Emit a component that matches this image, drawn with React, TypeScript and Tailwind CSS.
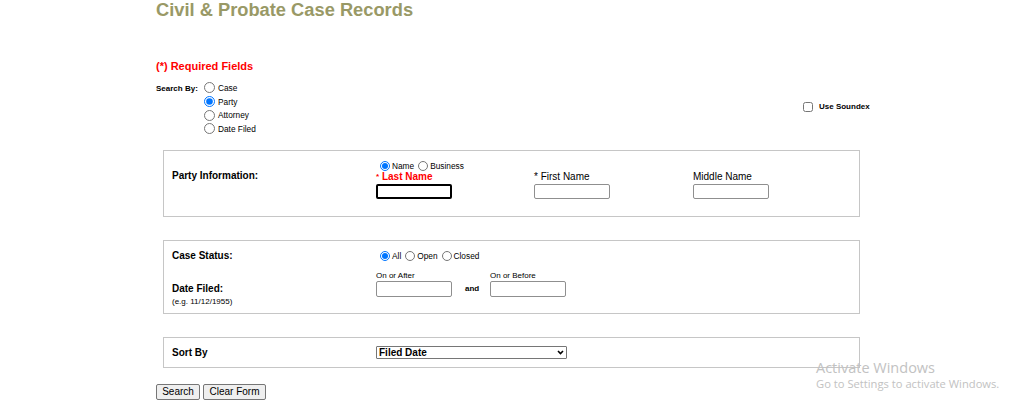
function Radio({ checked, label }: { checked?: boolean; label: string }) {
  return (
    <label className="flex items-center h-[10px] ml-[4px]">
      <input type="radio" defaultChecked={checked} className="m-0 w-[10px] h-[10px] accent-[#0075ff]" />
      <span className="ml-[2px] text-[8.3px] leading-[8px]">{label}</span>
    </label>
  );
}

function TextBox({ focused }: { focused?: boolean }) {
  return (
    <input
      type="text"
      className={
        focused
          ? "block w-[76px] h-[15px] border-2 border-black rounded-[2px] bg-white"
          : "block w-[76px] h-[15px] border border-[#8f8f8f] rounded-[2px] bg-white"
      }
    />
  );
}

export default function App() {
  return (
    <main className="relative w-[1024px] h-[406px] overflow-hidden bg-white text-black font-['Liberation_Sans',Arial,sans-serif]">
      <div className="pl-[156px]">
        <h1 className="text-[18.3px] leading-[19px] font-bold text-[#999966]">Civil &amp; Probate Case Records</h1>

        <p className="mt-[42px] text-[11px] leading-[11px] font-bold text-[#ff0000]">(*) Required Fields</p>

        {/* search by */}
        <div className="mt-[9px] flex">
          <div className="w-[647px] flex">
            <div className="w-[48px] pt-[1px] text-[8px] leading-[13.7px] font-bold">Search By:</div>
            <div className="flex flex-col">
              {["Case", "Party", "Attorney", "Date Filed"].map((s) => (
                <label key={s} className="flex items-center h-[13.7px]">
                  <input
                    type="radio"
                    name="searchby"
                    defaultChecked={s === "Party"}
                    className="m-0 w-[11px] h-[11px] accent-[#0075ff]"
                  />
                  <span className="ml-[3px] text-[8.3px] leading-[8px]">{s}</span>
                </label>
              ))}
            </div>
          </div>
          <label className="mt-[21px] self-start flex items-center h-[10px]">
            <input type="checkbox" className="m-0 w-[10px] h-[10px]" />
            <span className="ml-[6px] text-[8px] leading-[8px] font-bold">Use Soundex</span>
          </label>
        </div>

        {/* party information */}
        <section className="mt-[14px] ml-[7px] w-[697px] h-[67px] border border-[#c6c6c6] pl-[8px] flex">
          <div className="w-[204px] pt-[20.5px] text-[10px] leading-[10px] font-bold">Party Information:</div>
          <div className="w-[158px] pt-[10px] flex flex-col">
            <div className="flex h-[10px]">
              <Radio checked label="Name" />
              <Radio label="Business" />
            </div>
            <span className="mt-[1.5px] text-[10px] leading-[10px] font-bold text-[#ff0000]">
              <span className="text-[8px] align-top">*</span> Last Name
            </span>
            <div className="mt-[1.5px]">
              <TextBox focused />
            </div>
          </div>
          <div className="w-[159px] pt-[20px] flex flex-col">
            <span className="mt-[1.5px] text-[10px] leading-[10px]">* First Name</span>
            <div className="mt-[1.5px]">
              <TextBox />
            </div>
          </div>
          <div className="pt-[20px] flex flex-col">
            <span className="mt-[1.5px] text-[10px] leading-[10px]">Middle Name</span>
            <div className="mt-[1.5px]">
              <TextBox />
            </div>
          </div>
        </section>

        {/* case status / date filed */}
        <section className="mt-[23px] ml-[7px] w-[697px] h-[74px] border border-[#c6c6c6] pl-[8px]">
          <div className="mt-[10px] flex h-[10px]">
            <div className="w-[204px] text-[10px] leading-[10px] font-bold">Case Status:</div>
            <div className="flex">
              <Radio checked label="All" />
              <Radio label="Open" />
              <Radio label="Closed" />
            </div>
          </div>
          <div className="mt-[11.2px] flex items-start">
            <div className="w-[204px] pt-[11.8px]">
              <div className="text-[10px] leading-[10px] font-bold">Date Filed:</div>
              <div className="mt-[4.7px] text-[8px] leading-[8px]">(e.g. 11/12/1955)</div>
            </div>
            <div className="flex items-end">
              <div>
                <div className="text-[8px] leading-[8px]">On or After</div>
                <input type="text" className="mt-[0.8px] block w-[76px] h-[16px] border border-[#8f8f8f] rounded-[2px]" />
              </div>
              <div className="ml-[13px] w-[25px] h-[16px] flex items-center text-[8px] font-bold">and</div>
              <div>
                <div className="text-[8px] leading-[8px]">On or Before</div>
                <input type="text" className="mt-[0.8px] block w-[76px] h-[16px] border border-[#8f8f8f] rounded-[2px]" />
              </div>
            </div>
          </div>
        </section>

        {/* sort by */}
        <section className="mt-[23px] ml-[7px] w-[697px] h-[31px] border border-[#c6c6c6] pl-[8px] flex items-center">
          <div className="w-[204px] pt-[1px] text-[10px] leading-[10px] font-bold">Sort By</div>
          <div className="relative">
            <select className="appearance-none block w-[191px] h-[13px] border border-[#767676] rounded-[1px] bg-white pl-[2px] text-[10px] leading-[11px] font-bold">
              <option>Filed Date</option>
              <option>Case Number</option>
              <option>Party Name</option>
            </select>
            <svg
              className="absolute right-[3px] top-[4px] pointer-events-none"
              width="7"
              height="5"
              viewBox="0 0 7 5"
              fill="none"
            >
              <path d="M1 1l2.5 2.5L6 1" stroke="#000" strokeWidth="1.6" />
            </svg>
          </div>
        </section>

        <div className="mt-[16px] flex gap-[3px]">
          <button className="w-[44px] h-[16px] border border-[#767676] rounded-[2px] bg-[#efefef] text-[10px] leading-[10px]">
            Search
          </button>
          <button className="w-[63px] h-[16px] border border-[#767676] rounded-[2px] bg-[#efefef] text-[10px] leading-[10px]">
            Clear Form
          </button>
        </div>
      </div>

      <div className="absolute left-[816px] top-[359px] text-[#c2c2c2] font-['Open_Sans','Noto_Sans',sans-serif] pointer-events-none">
        <div className="text-[14.5px] leading-[18px]">Activate Windows</div>
        <div className="text-[11.2px] leading-[14px]">Go to Settings to activate Windows.</div>
      </div>
    </main>
  );
}
